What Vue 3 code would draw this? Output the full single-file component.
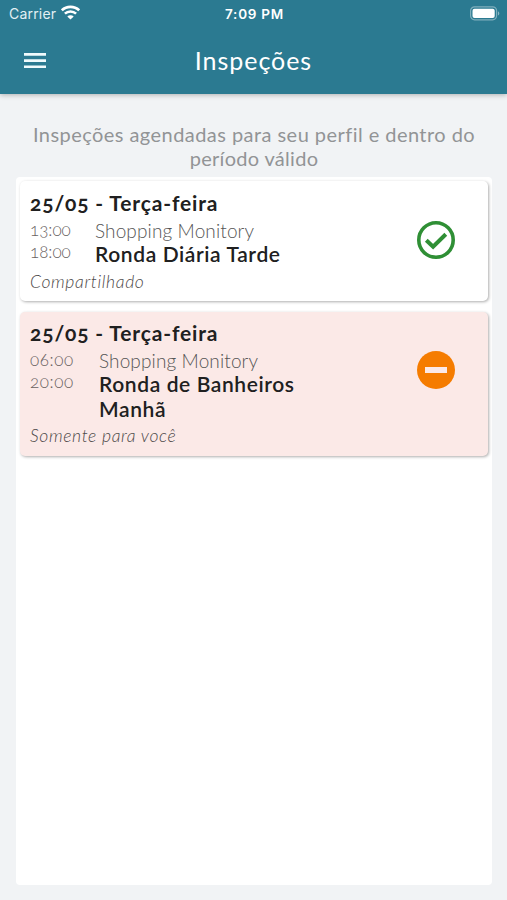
<script setup>
const inspections = [
  {
    id: 1, date: '25/05 - Terça-feira', start: '13:00', end: '18:00',
    place: 'Shopping Monitory', title: 'Ronda Diária Tarde',
    note: 'Compartilhado', status: 'done'
  },
  {
    id: 2, date: '25/05 - Terça-feira', start: '06:00', end: '20:00',
    place: 'Shopping Monitory', title: 'Ronda de Banheiros Manhã',
    note: 'Somente para você', status: 'blocked'
  }
]
</script>

<template>
  <div class="screen">
    <header class="top">
      <div class="status">
        <div class="carrier">
          <span>Carrier</span>
          <svg width="19" height="15" viewBox="0 0 19 15" fill="none" stroke="#fff">
            <path d="M.8 5.3C5.6.6 13.4.6 18.2 5.3" stroke-width="2.7" />
            <path d="M3.9 8.6C7 5.7 12 5.7 15.1 8.6" stroke-width="2.6" />
            <path d="M9.5 14.6 6.3 11.5C8 9.9 11 9.9 12.7 11.5Z" fill="#fff" stroke="none" />
          </svg>
        </div>
        <span class="clock">7:09 PM</span>
        <svg class="battery" width="31" height="15" viewBox="0 0 31 15">
          <rect x="1.6" y=".8" width="26" height="13" rx="4" fill="none" stroke="#fff" stroke-opacity=".4" stroke-width="1.2" />
          <rect x="3.5" y="2.7" width="22.2" height="9.2" rx="2" fill="#fff" />
          <path d="M29 5.2v4.4c1.8-.8 1.8-3.6 0-4.4Z" fill="#fff" fill-opacity=".45" />
        </svg>
      </div>
      <div class="bar">
        <svg class="menu" width="22" height="16" viewBox="0 0 22 16" fill="#f0fafc">
          <path d="M0 0h22v2.7H0zM0 6.3h22v2.7H0zM0 12.4h22v2.7H0z" />
        </svg>
        <h1>Inspeções</h1>
      </div>
    </header>
    <main class="content">
      <p class="intro"><span class="wide">Inspeções agendadas para seu perfil e dentro do</span><br><span>período válido</span></p>
      <section class="panel">
        <article v-for="item in inspections" :key="item.id" class="card" :class="item.status">
          <div class="details">
            <h2>{{ item.date }}</h2>
            <div class="row">
              <div class="times"><span>{{ item.start }}</span><span>{{ item.end }}</span></div>
              <div class="job">
                <span class="place">{{ item.place }}</span>
                <h3>{{ item.title }}</h3>
              </div>
            </div>
            <p class="note">{{ item.note }}</p>
          </div>
          <svg v-if="item.status === 'done'" class="icon" viewBox="0 0 38 38" fill="none" stroke="#2f8f35">
            <circle cx="19" cy="19" r="17.2" stroke-width="3.6" />
            <path d="m9.3 19.2 6.8 6.6L28.8 13.3" stroke-width="4" />
          </svg>
          <svg v-else class="icon" viewBox="0 0 38 38">
            <circle cx="19" cy="19" r="19" fill="#f57c00" />
            <path d="M8 16h22v6H8z" fill="#fbe9e7" />
          </svg>
        </article>
      </section>
    </main>
  </div>
</template>

<style>
body { background: #f1f3f5; }
</style>

<style scoped>
* { box-sizing: border-box; }
h1, h2, h3, p { margin: 0; }
.screen {
  width: 507px; height: 900px; display: flex; flex-direction: column;
  background: #f1f3f5; overflow: hidden;
  font-family: Lato, "Open Sans", sans-serif;
  font-variant-numeric: oldstyle-nums;
}
.top {
  height: 94px; flex: none; background: #2b7a91; color: #fff;
  box-shadow: 0 1px 5px rgba(0, 0, 0, .28);
}
.status {
  height: 28px; padding: 0 7px 0 9px; display: grid;
  grid-template-columns: 1fr auto 1fr; align-items: center;
  font: 14px/28px Inter, sans-serif;
}
.carrier { display: flex; align-items: center; gap: 5px; letter-spacing: .2px; color: #e3f0f4; }
.carrier svg { margin-top: -3px; }
.clock { font-weight: 600; font-size: 13.5px; letter-spacing: .75px; }
.battery { justify-self: end; margin-top: -1px; }
.bar { height: 65px; padding: 0 24px; display: grid; grid-template-columns: 22px 1fr 22px; align-items: center; }
h1 { font-size: 25px; font-weight: 400; text-align: center; line-height: 30px; letter-spacing: .95px; margin-top: -1px; }
.content { flex: 1; padding: 29px 15px 15px 16px; display: flex; flex-direction: column; }
.intro { height: 54px; text-align: center; font-size: 20px; line-height: 23.5px; color: #929496; white-space: nowrap; letter-spacing: .3px; }
.wide { letter-spacing: .45px; }
.panel {
  flex: 1; background: #fff; border-radius: 4px; padding: 4px;
  display: flex; flex-direction: column; gap: 11px;
}
.card {
  height: 120px; padding: 9px 33px 0 10px; border-radius: 5px; display: flex;
  justify-content: space-between; background: #fff; color: #202020;
  box-shadow: 1px 1px 3px rgba(0, 0, 0, .32);
}
.blocked { height: 144px; padding-top: 8px; background: #fbe9e7; }
h2 { font-size: 21px; font-weight: 700; line-height: 26px; letter-spacing: .85px; white-space: nowrap; }
.row { display: flex; padding-top: 3px; }
.times { width: 65px; display: flex; flex-direction: column; font-size: 17px; line-height: 22px; color: #68615f; font-weight: 300; }
.blocked .times { width: 69px; letter-spacing: .6px; }
.job { width: 215px; }
.place { display: block; font-size: 19px; line-height: 23px; font-weight: 300; color: #555; letter-spacing: .12px; }
h3 { font-size: 21px; line-height: 24.5px; font-weight: 600; letter-spacing: .6px; }
.note { font-size: 17.5px; line-height: 22px; padding-top: 4px; font-style: italic; font-weight: 300; color: #4c4848; letter-spacing: .65px; }
.icon { width: 38px; height: 38px; margin-top: 31px; flex: none; }
</style>
